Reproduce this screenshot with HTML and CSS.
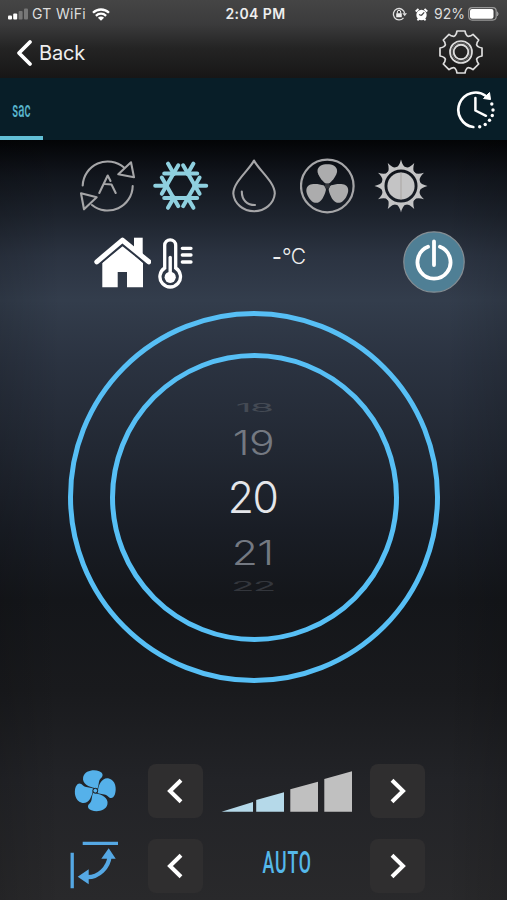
FILE: index.html
```html
<!DOCTYPE html>
<html lang="en">
<head>
<meta charset="utf-8">
<meta name="viewport" content="width=device-width, initial-scale=1">
<title>Air conditioner</title>
<link rel="stylesheet" href="styles.css">
</head>
<body>
<div class="app">
  <header class="top">
    <div class="status">
      <div class="status-left">
        <svg width="21" height="12" viewBox="0 0 21 12"><g fill="#fff"><rect y="7.5" width="4" height="4" rx="1"/><rect x="5.2" y="5.5" width="4" height="6" rx="1"/></g><g fill="#777"><rect x="10.6" y="3" width="4" height="8.5" rx="1"/><rect x="16" y="0.5" width="4" height="11" rx="1"/></g></svg>
        <span class="carrier">GT WiFi</span>
        <svg class="wifi" width="18" height="13" viewBox="0 0 18 13"><g fill="none" stroke="#fff" stroke-width="2.3"><path d="M1 4.8C5.5.4 12.5.4 17 4.8"/><path d="M3.9 7.8C6.8 5 11.2 5 14.1 7.8"/></g><path d="M5.9 9.8C7.7 8.2 10.3 8.2 12.1 9.8L9 12.8Z" fill="#fff"/></svg>
      </div>
      <span class="time">2:04 PM</span>
      <div class="status-right">
        <svg width="15" height="14" viewBox="0 0 15 14"><path d="M11.5 10.8A5.7 5.7 0 1 1 12.7 6.5" fill="none" stroke="#ddd" stroke-width="1.3"/><path d="M10.3 6.2H15L12.7 9.2Z" fill="#ddd"/><rect x="4.2" y="6.2" width="5.6" height="4" rx=".5" fill="#eee"/><path d="M5.3 6.5V5a1.7 1.7 0 0 1 3.4 0V6.5" fill="none" stroke="#eee"/></svg>
        <svg class="alarm" width="13" height="13" viewBox="0 0 13 13"><circle cx="6.5" cy="7" r="5.2" fill="#fff"/><path d="M.7 3.5L3.5 1M12.3 3.5L9.5 1M2.5 12.3L4 10.5M10.5 12.3L9 10.5" stroke="#fff" stroke-width="1.8"/><path d="M6.3 7.5L9.2 4.3M4 6.5L6.3 7.5" stroke="#444" stroke-width="1.2"/></svg>
        <span class="percent">92%</span>
        <svg width="31" height="14" viewBox="0 0 31 14"><rect x=".7" y=".7" width="27.5" height="12.4" rx="3.5" fill="none" stroke="#999" stroke-width="1.2"/><rect x="2" y="2" width="23.5" height="9.8" rx="2" fill="#fff"/><path d="M29.3 4.8Q31 7 29.3 9Z" fill="#999" stroke="#999"/></svg>
      </div>
    </div>
    <div class="nav">
      <div class="back">
        <svg width="18" height="28" viewBox="0 0 18 28"><path d="M15 3L4 14L15 25" fill="none" stroke="#fff" stroke-width="3.8" stroke-linecap="round" stroke-linejoin="round"/></svg>
        <span>Back</span>
      </div>
      <svg width="46" height="46" viewBox="-23 -23 46 46"><g fill="none" stroke="#ddd" stroke-width="1.7" stroke-linejoin="round"><path d="M-5.5-17Q-4.5-18-4-21H4Q4.5-18 5.5-17Q7-15 8.1-15.9Q9.5-15.7 12-17.7L17.7-12Q15.7-9.5 15.9-8.1Q15-7 17-5.5Q18-4.5 21-4V4Q18 4.5 17 5.5Q15 7 15.9 8.1Q15.7 9.5 17.7 12L12 17.7Q9.5 15.7 8.1 15.9Q7 15 5.5 17Q4.5 18 4 21H-4Q-4.5 18-5.5 17Q-7 15-8.1 15.9Q-9.5 15.7-12 17.7L-17.7 12Q-15.7 9.5-15.9 8.1Q-15 7-17 5.5Q-18 4.5-21 4V-4Q-18-4.5-17-5.5Q-15-7-15.9-8.1Q-15.7-9.5-17.7-12L-12-17.7Q-9.5-15.7-8.1-15.9Q-7-15-5.5-17Z"/><circle r="11"/><circle r="7.3" stroke-width="1.9"/><circle r="9.2" stroke="#888" stroke-width=".7"/></g></svg>
    </div>
  </header>

  <div class="tabs">
    <div class="tab"><span>sac</span></div>
    <svg width="42" height="42" viewBox="-21 -21 42 42"><g fill="none" stroke="#fff" stroke-width="2.7" stroke-linecap="round" stroke-linejoin="round"><path d="M-2.7 17A17.3 17.3 0 1 1 10-14"/><path d="M-.6-12V.5L10 5.8" stroke-width="2.5"/></g><path d="M13.5-17.5L14.5-10.5L7.5-11.5Z" fill="#fff" stroke="#fff"/><g fill="#fff"><circle cx="15.8" cy="-6" r="1.7"/><circle cx="17" cy="0" r="1.7"/><circle cx="16.3" cy="5.5" r="1.7"/><circle cx="13.5" cy="10.3" r="1.7"/><circle cx="9.2" cy="14.5" r="1.7"/><circle cx="3.7" cy="16.8" r="1.7"/></g></svg>
  </div>

  <main class="panel">
    <div class="modes">
      <svg viewBox="0 0 56 56"><g fill="none" stroke="#a6a6a8" stroke-width="2.1" stroke-linejoin="round" stroke-linecap="round"><path d="M3.7 27.5A25 25 0 0 1 45 9.5"/><path d="M52 4.3L55 19.3L39.3 16.3Z"/><path d="M53.7 28A25 25 0 0 1 13 47"/><path d="M2 35.3L17.7 39.3L5 51.3Z"/><path d="M20.3 35L28.7 17.5L31.5 23M26 26L32.5 26.5L36.7 35"/></g></svg>
      <svg viewBox="-27.7 -27.7 56 56"><defs><path id="flake" d="M-16.5-12.3H16.5M13.5 0H25.5"/></defs><g stroke="#8fd0df" stroke-width="4" stroke-linecap="round"><use href="#flake"/><use href="#flake" transform="rotate(60)"/><use href="#flake" transform="rotate(120)"/><use href="#flake" transform="rotate(180)"/><use href="#flake" transform="rotate(240)"/><use href="#flake" transform="rotate(300)"/></g></svg>
      <svg viewBox="0 0 56 56"><g fill="none" stroke="#a6a6a8" stroke-width="2.1" stroke-linecap="round" stroke-linejoin="round"><path d="M28 2.5C32 11 48.8 24 48.8 35.5A20.8 19 0 0 1 7.3 35.5C7.3 24 24 11 28 2.5Z"/><path d="M15.8 33.5C15.8 42 21 47 29 47"/></g></svg>
      <svg viewBox="-27.3 -28 56 56"><defs><path id="blade" d="M-2.5-3C-5-5-9.8-11-9.8-15C-9.8-20-5-21.8 0-21.8S9.8-20 9.8-15C9.8-11 5-5 2.5-3Q0-1.5-2.5-3Z"/></defs><circle r="26.3" fill="none" stroke="#a6a6a8" stroke-width="2.2"/><g fill="#acacad"><use href="#blade"/><use href="#blade" transform="rotate(120)"/><use href="#blade" transform="rotate(240)"/></g><circle r="2.6" fill="#33363b"/></svg>
      <svg viewBox="-28 -28 56 56"><defs><path id="ray" d="M-5.5-17.5Q-1.5-20 0-26.5Q1.5-20 5.5-17.5Z"/></defs><g fill="#c4c4c5"><use href="#ray"/><use href="#ray" transform="rotate(30)"/><use href="#ray" transform="rotate(60)"/><use href="#ray" transform="rotate(90)"/><use href="#ray" transform="rotate(120)"/><use href="#ray" transform="rotate(150)"/><use href="#ray" transform="rotate(180)"/><use href="#ray" transform="rotate(210)"/><use href="#ray" transform="rotate(240)"/><use href="#ray" transform="rotate(270)"/><use href="#ray" transform="rotate(300)"/><use href="#ray" transform="rotate(330)"/><circle r="13.6"/></g><circle r="18" fill="none" stroke="#c4c4c5" stroke-width="3"/><path d="M0-13.5V13.5" stroke="#a9a5a2"/></svg>
    </div>

    <div class="room">
      <svg class="house" width="58" height="52" viewBox="0 0 58 52"><g fill="#fff"><path d="M29.7 9L50 27V51.3H34V36H24.7V51.3H9.3V27Z"/><path d="M41 1.7H49.7V20H41Z"/></g><path d="M3.8 25.8L29.5 4.7L55.8 25.8" fill="none" stroke="#2b3443" stroke-width="5" transform="translate(0 2.3)"/><path d="M3.8 25.8L29.5 4.2L55.8 25.8" fill="none" stroke="#fff" stroke-width="5" stroke-linecap="round" stroke-linejoin="round"/></svg>
      <svg class="thermo" width="36" height="56" viewBox="0 0 36 56"><path d="M7.7 32V9.3a5.500 5.500 0 0 1 11 0V32A10.300 10.300 0 1 1 7.700 32Z" fill="none" stroke="#fff" stroke-width="3.3"/><circle cx="13.2" cy="41.3" r="5.6" fill="#fff"/><path d="M13.2 21.5V40" stroke="#fff" stroke-width="3.4" stroke-linecap="round"/><path d="M25.3 12.3H34M25.3 19H34M25.3 26H34" stroke="#fff" stroke-width="3.3" stroke-linecap="round"/></svg>
      <div class="reading"><span class="dash">-</span><span>°C</span></div>
      <svg class="power" width="62" height="62" viewBox="-31 -31 62 62"><circle r="30.2" fill="#4f7f95" stroke="#858e94" stroke-width="1.2"/><path d="M-6-15.2A16.5 16.5 0 1 0 6-15.2M0-20.5V3" fill="none" stroke="#fff" stroke-width="3.8" stroke-linecap="round"/></svg>
    </div>

    <div class="ring">
      <div class="dial">
        <span class="num far above">18</span>
        <span class="num near">19</span>
        <span class="num current">20</span>
        <span class="num near">21</span>
        <span class="num far below">22</span>
      </div>
    </div>

    <div class="controls">
      <svg width="56" height="54" viewBox="-27.3 -26.7 56 54"><defs><path id="prop" d="M-1-2.4C-6-2.4-13.5-4.5-13-11C-12.5-17.5-4-19.8 1-18.6C5.5-17.5 5.5-14.500 3.300-12C1.500-9.500 2.800-6 1.800-2.400Z"/></defs><g fill="#55b1ea" transform="rotate(8) scale(1.07)"><use href="#prop"/><use href="#prop" transform="rotate(90)"/><use href="#prop" transform="rotate(180)"/><use href="#prop" transform="rotate(270)"/></g><circle r="2.4" fill="#55b1ea" stroke="#222326" stroke-width="1"/></svg>
      <div class="btn"><svg width="54" height="54" viewBox="0 0 54 54"><path d="M33 16.3L22 27L33 37.7"/></svg></div>
      <svg class="level" width="132" height="54" viewBox="0 0 132 54"><g fill="#b5d9e9"><path d="M1.5 47.7L33 38V47.7Z"/><path d="M36.2 36L64 28.3V47.7H36.2Z"/></g><g fill="#c0c0c0"><path d="M70.3 25.3L98 17.7V47.7H70.3Z"/><path d="M104.3 15L132 7.3V47.7H104.3Z"/></g></svg>
      <div class="btn"><svg width="54" height="54" viewBox="0 0 54 54"><path d="M22 16.3L33 27L22 37.7"/></svg></div>

      <svg width="56" height="54" viewBox="68 839 56 54"><g stroke="#55a8e4" fill="none" stroke-width="3.3"><path d="M82.7 843.3H118M72.2 852.7V888.3"/><path d="M87 877.2C99 877.5 108.5 867 109.5 857" stroke-width="4.2"/></g><path d="M77.7 876.7L88.7 869.3V884.3ZM108.7 848.3L101.3 858.7H115.7Z" fill="#55a8e4"/></svg>
      <div class="btn"><svg width="54" height="54" viewBox="0 0 54 54"><path d="M33 16.3L22 27L33 37.7"/></svg></div>
      <div class="auto"><span>AUTO</span></div>
      <div class="btn"><svg width="54" height="54" viewBox="0 0 54 54"><path d="M22 16.3L33 27L22 37.7"/></svg></div>
    </div>
  </main>
</div>
</body>
</html>
```
FILE: styles.css
```css
* { box-sizing: border-box; }
body { margin: 0; background: #17181b; }
svg { display: block; flex: none; }
.app {
  width: 507px;
  height: 900px;
  overflow: hidden;
  display: flex;
  flex-direction: column;
  font-family: Inter, "Liberation Sans", sans-serif;
  color: #eee;
}
.top {
  height: 78px;
  background: linear-gradient(#454545 0, #3b3b3c 24px, #242424 48px, #171616 78px);
}
.status {
  height: 28px;
  display: grid;
  grid-template-columns: 1fr auto 1fr;
  align-items: center;
  padding: 0 8px;
  font-size: 14px;
  line-height: 28px;
}
.status-left, .status-right { display: flex; align-items: center; }
.status-right { justify-content: flex-end; }
.carrier { margin-left: 3px; width: 55px; white-space: nowrap; letter-spacing: 0.3px; color: #ddd; }
.wifi { margin-left: 5px; }
.time { font-weight: 600; font-size: 14px; letter-spacing: 0.4px; padding-left: 4px; }
.alarm { margin: 0 6px 0 8px; }
.percent { width: 34px; color: #ddd; white-space: nowrap; }
.nav {
  height: 50px;
  display: flex;
  align-items: center;
  justify-content: space-between;
  padding: 0 23px 2px 15px;
}
.back { display: flex; align-items: center; gap: 6px; padding-top: 1px; font-size: 20px; letter-spacing: -0.2px; }
.tabs {
  height: 62px;
  background: #081e28;
  display: flex;
  align-items: center;
  justify-content: space-between;
  padding: 1px 10px 0 0;
}
.tab {
  width: 43px;
  height: 61px;
  border-bottom: 4px solid #62bfd6;
  display: flex;
  justify-content: center;
  line-height: 62px;
  font-family: Roboto, sans-serif;
  font-size: 22px;
  font-weight: 500;
  color: #58b4cc;
}
.tab span { transform: scaleX(0.52); }
.panel {
  flex: 1;
  background:
    linear-gradient(90deg, rgba(0,0,0,.12), transparent 12%, transparent 88%, rgba(0,0,0,.12)),
    linear-gradient(#030406 0, #11151c 35px, #1d232d 75px, #2b3341 115px, #333d4c 160px, #2b3341 220px, #222833 310px, #191d25 390px, #14161a 460px, #191a1d 550px, #222327 640px, #29292b 760px);
}
.modes { display: flex; gap: 17.5px; padding: 18px 0 0 79px; }
.modes svg { width: 56px; height: 56px; }
.room { height: 97px; display: flex; padding-left: 93px; }
.house { margin-top: 22px; }
.thermo { margin: 22px 0 0 6px; }
.reading { width: 210px; padding: 29px 0 0 79px; display: flex; font-size: 21px; line-height: 28px; font-weight: 300; letter-spacing: -0.5px; }
.dash { width: 10px; font-weight: 500; }
.power { margin-top: 17px; }
.ring {
  width: 372px;
  height: 372px;
  margin-left: 68px;
  border: 5px solid #57bff5;
  border-radius: 50%;
  display: grid;
  place-items: center;
}
.dial {
  width: 289px;
  height: 289px;
  border: 5px solid #57bff5;
  border-radius: 50%;
  display: flex;
  flex-direction: column;
  align-items: center;
  justify-content: center;
}
.num { font-size: 44px; line-height: 58px; height: 58px; font-weight: 300; letter-spacing: -1.5px; color: #e4e6ea; }
.current { transform: translateX(-1px) scaleX(0.97); font-weight: 350; }
.near { height: 52px; line-height: 52px; font-weight: 300; font-size: 38px; letter-spacing: -0.5px; transform: translate(-1px, 1px) scale(1.12, 0.88); color: #747982; }
.far { height: 15px; line-height: 15px; font-size: 38px; font-weight: 400; color: #444a54; }
.above { transform: translateY(-1px) scale(1.02, 0.32); }
.below { transform: translate(-1px, 1px) scaleY(0.34); color: #33363c; }
.controls {
  display: grid;
  grid-template-columns: 56px 55px 132px 55px;
  grid-auto-rows: 54px;
  column-gap: 18px;
  row-gap: 21px;
  padding: 81px 0 0 68px;
}
.controls > :nth-child(4n+2) { margin-left: 6px; }
.controls > :nth-child(4n+3) { margin-left: 5px; }
.controls > :nth-child(4n+4) { margin-left: 5px; }
.btn { width: 55px; height: 54px; border-radius: 8px; background: #2f2e2f; }
.btn path { fill: none; stroke: #fff; stroke-width: 4; }
.auto { display: flex; justify-content: center; padding-left: 7px; font-family: Roboto, sans-serif; font-size: 31px; font-weight: 500; line-height: 48px; letter-spacing: 1.5px; color: #55b8ea; }
.auto span { transform: scaleX(0.57); }
```
